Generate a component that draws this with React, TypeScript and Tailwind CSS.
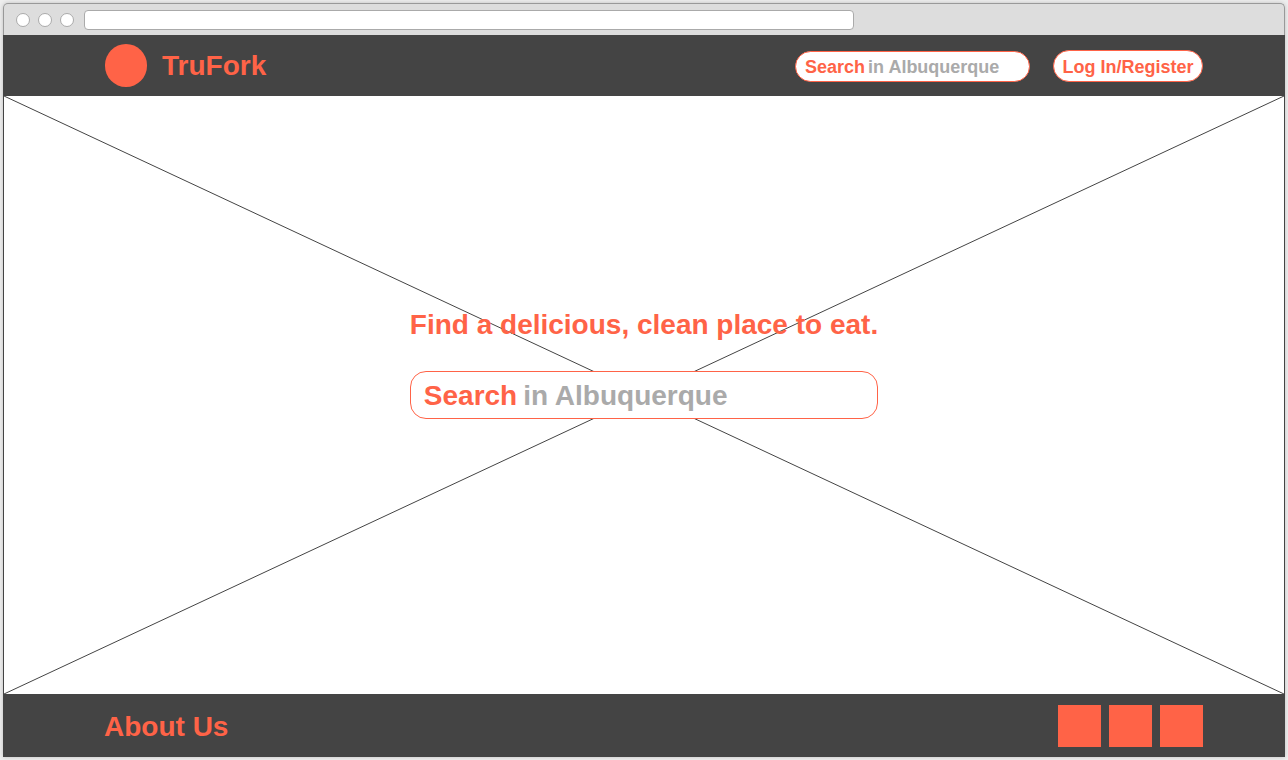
function WindowBar() {
  return (
    <div className="flex h-8 shrink-0 items-center rounded-t-[5px] border border-b-0 border-[#999] bg-[#ddd] px-3">
      <div className="flex gap-2" aria-hidden="true">
        <span className="size-3.5 rounded-full border border-[#aaa] bg-white" />
        <span className="size-3.5 rounded-full border border-[#aaa] bg-white" />
        <span className="size-3.5 rounded-full border border-[#aaa] bg-white" />
      </div>
      <input
        type="text"
        aria-label="Address"
        className="ml-2.5 h-5 w-[770px] min-w-0 rounded border border-[#aaa] bg-white px-2 text-xs text-[#444] outline-none"
      />
    </div>
  );
}

function Header() {
  return (
    <header className="flex h-[61px] shrink-0 items-center justify-between bg-[#444] pr-[82px] pl-[102px]">
      <a href="#home" className="flex items-center gap-[15px]">
        <span className="h-[43px] w-[42px] rounded-full bg-[#ff6347]" />
        <span className="text-[28px] leading-8">TruFork</span>
      </a>
      <div className="flex items-end gap-[23px] text-[18px]">
        <form className="flex h-[31px] w-[235px] items-center gap-[3px] rounded-full border border-[#ff6347] bg-white px-[9px] pt-0.5">
          <label htmlFor="header-search">Search</label>
          <input
            id="header-search"
            type="text"
            placeholder="in Albuquerque"
            className="min-w-0 flex-1 bg-transparent text-[#444] outline-none placeholder:text-[#aaa]"
          />
        </form>
        <button
          type="button"
          className="flex h-8 w-[150px] items-center justify-center whitespace-nowrap rounded-full border border-[#ff6347] bg-white pt-1"
        >
          Log In/Register
        </button>
      </div>
    </header>
  );
}

function Hero() {
  return (
    <main className="relative grid flex-1 grid-rows-[1fr_auto_1fr] justify-center border-x border-[#444] bg-white text-[28px] leading-8">
      <svg
        className="absolute inset-0 h-full w-full"
        viewBox="0 0 100 100"
        preserveAspectRatio="none"
        aria-hidden="true"
      >
        <path
          d="M0 0 100 100M100 0 0 100"
          fill="none"
          stroke="#444"
          strokeWidth="1"
          vectorEffect="non-scaling-stroke"
        />
      </svg>
      <h1 className="relative self-end whitespace-nowrap pb-[30px] text-center">
        Find a delicious, clean place to eat.
      </h1>
      <form className="relative flex h-12 w-[468px] items-center gap-1.5 rounded-2xl border border-[#ff6347] bg-white px-[13px] pt-0.5">
        <label htmlFor="hero-search">Search</label>
        <input
          id="hero-search"
          type="text"
          placeholder="in Albuquerque"
          className="min-w-0 flex-1 bg-transparent text-[#444] outline-none placeholder:text-[#aaa]"
        />
      </form>
    </main>
  );
}

function Footer() {
  return (
    <footer className="flex h-[63px] shrink-0 items-center justify-between bg-[#444] pr-[82px] pl-[101px]">
      <a href="#about" className="pt-0.5 text-[28px] leading-8">
        About Us
      </a>
      <nav aria-label="Social links" className="flex gap-2">
        <a href="#social-1" aria-label="First social link" className="h-[42px] w-[43px] bg-[#ff6347]" />
        <a href="#social-2" aria-label="Second social link" className="h-[42px] w-[43px] bg-[#ff6347]" />
        <a href="#social-3" aria-label="Third social link" className="h-[42px] w-[43px] bg-[#ff6347]" />
      </nav>
    </footer>
  );
}

export default function App() {
  return (
    <div className="flex min-h-screen flex-col bg-[#eee] p-[3px] font-['Liberation_Sans',Arial,sans-serif] font-bold text-[#ff6347]">
      <div className="flex flex-1 flex-col rounded-t-[5px] shadow-[0_0_4px_rgba(0,0,0,0.2)]">
        <WindowBar />
        <Header />
        <Hero />
        <Footer />
      </div>
    </div>
  );
}
